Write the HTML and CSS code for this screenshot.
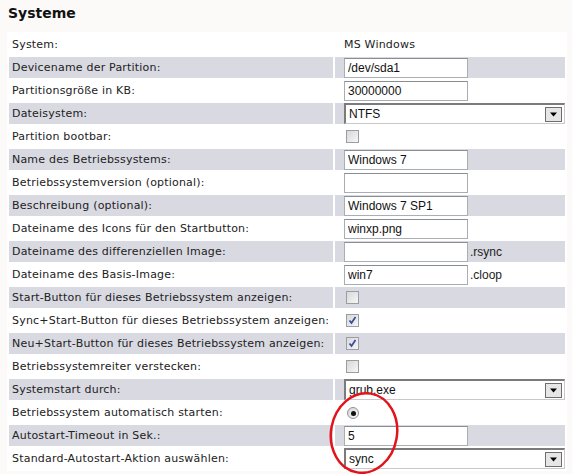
FILE: index.html
```html
<!DOCTYPE html>
<html>
<head>
<meta charset="utf-8">
<link rel="stylesheet" href="styles.css">
</head>
<body>
<div class="page">
  <h1 class="title">Systeme</h1>
  <table class="form">
    <tr class="odd"><td class="lbl">System:</td><td class="val">MS Windows</td></tr>
    <tr class="even"><td class="lbl">Devicename der Partition:</td><td class="val"><input class="txt" type="text" value="/dev/sda1"></td></tr>
    <tr class="odd"><td class="lbl">Partitionsgröße in KB:</td><td class="val"><input class="txt" type="text" value="30000000"></td></tr>
    <tr class="even"><td class="lbl">Dateisystem:</td><td class="val"><div class="sel"><span class="sel-text">NTFS</span><span class="sel-btn"><svg width="9" height="5" viewBox="0 0 9 5"><path d="M1 0.5h7L4.5 4.5z" fill="#000"/></svg></span></div></td></tr>
    <tr class="odd"><td class="lbl">Partition bootbar:</td><td class="val"><span class="cb"></span></td></tr>
    <tr class="even"><td class="lbl">Name des Betriebssystems:</td><td class="val"><input class="txt" type="text" value="Windows 7"></td></tr>
    <tr class="odd"><td class="lbl">Betriebssystemversion (optional):</td><td class="val"><input class="txt" type="text" value=""></td></tr>
    <tr class="even"><td class="lbl">Beschreibung (optional):</td><td class="val"><input class="txt" type="text" value="Windows 7 SP1"></td></tr>
    <tr class="odd"><td class="lbl">Dateiname des Icons für den Startbutton:</td><td class="val"><input class="txt" type="text" value="winxp.png"></td></tr>
    <tr class="even"><td class="lbl">Dateiname des differenziellen Image:</td><td class="val"><input class="txt" type="text" value=""><span class="ext">.rsync</span></td></tr>
    <tr class="odd"><td class="lbl">Dateiname des Basis-Image:</td><td class="val"><input class="txt" type="text" value="win7"><span class="ext">.cloop</span></td></tr>
    <tr class="even"><td class="lbl">Start-Button für dieses Betriebssystem anzeigen:</td><td class="val"><span class="cb"></span></td></tr>
    <tr class="odd"><td class="lbl">Sync+Start-Button für dieses Betriebssystem anzeigen:</td><td class="val"><span class="cb"><svg width="11" height="11" viewBox="0 0 11 11"><path d="M2.5 5.5l2 2.5 4-6" fill="none" stroke="#3b4f9a" stroke-width="1.8"/></svg></span></td></tr>
    <tr class="even"><td class="lbl">Neu+Start-Button für dieses Betriebssystem anzeigen:</td><td class="val"><span class="cb"><svg width="11" height="11" viewBox="0 0 11 11"><path d="M2.5 5.5l2 2.5 4-6" fill="none" stroke="#3b4f9a" stroke-width="1.8"/></svg></span></td></tr>
    <tr class="odd"><td class="lbl">Betriebssystemreiter verstecken:</td><td class="val"><span class="cb"></span></td></tr>
    <tr class="even"><td class="lbl">Systemstart durch:</td><td class="val"><div class="sel"><span class="sel-text">grub.exe</span><span class="sel-btn"><svg width="9" height="5" viewBox="0 0 9 5"><path d="M1 0.5h7L4.5 4.5z" fill="#000"/></svg></span></div></td></tr>
    <tr class="odd"><td class="lbl">Betriebssystem automatisch starten:</td><td class="val"><span class="radio"><span class="dot"></span></span></td></tr>
    <tr class="even"><td class="lbl">Autostart-Timeout in Sek.:</td><td class="val"><input class="txt" type="text" value="5"></td></tr>
    <tr class="odd"><td class="lbl">Standard-Autostart-Aktion auswählen:</td><td class="val"><div class="sel"><span class="sel-text">sync</span><span class="sel-btn"><svg width="9" height="5" viewBox="0 0 9 5"><path d="M1 0.5h7L4.5 4.5z" fill="#000"/></svg></span></div></td></tr>
  </table>
  <svg class="mark" width="90" height="110" viewBox="0 0 90 110">
    <ellipse cx="45" cy="55" rx="33" ry="40" fill="none" stroke="#e2141b" stroke-width="2.5" transform="rotate(10 45 55)"/>
  </svg>
</div>
</body>
</html>
```

FILE: styles.css
```css
html, body {
  margin: 0;
  padding: 0;
  background: #fbfaf8;
}
.page {
  position: relative;
  padding: 5px 4px 0 8px;
  height: 469px;
  overflow: hidden;
  font-family: "DejaVu Sans", Verdana, sans-serif;
  font-size: 11px;
  color: #222;
}
.title {
  margin: 0;
  font-size: 14px;
  font-weight: bold;
  line-height: 16px;
  color: #111;
}
.form {
  margin-top: 11px;
  width: 560px;
  border-collapse: separate;
  border-spacing: 2px;
  background: #fff;
  margin-left: -1px;
}
.form td {
  height: 21px;
  padding: 0;
  vertical-align: middle;
  letter-spacing: 0.2px;
}
.form .lbl {
  width: 321px;
  padding-left: 3px;
  white-space: nowrap;
}
.form .val {
  padding-left: 9px;
  white-space: nowrap;
}
.even td {
  background: #d9d9e1;
}
.odd td {
  background: #fff;
}
.txt {
  box-sizing: border-box;
  width: 124px;
  height: 20px;
  margin: 0;
  padding: 0 3px;
  border: 1px solid #a9aeb3;
  border-top-color: #8a8e93;
  background: #fff;
  font-family: "Liberation Sans", Arial, sans-serif;
  font-size: 12px;
  letter-spacing: 0;
  color: #111;
  vertical-align: middle;
}
.ext {
  font-family: "Liberation Sans", Arial, sans-serif;
  font-size: 12px;
  letter-spacing: 0;
  margin-left: 2px;
  vertical-align: middle;
}
.sel {
  box-sizing: border-box;
  width: 221px;
  height: 21px;
  display: flex;
  align-items: center;
  justify-content: space-between;
  border: 1px solid #c9c9c9;
  border-top: 2px solid #7b7b7b;
  border-left: 2px solid #7b7b7b;
  background: #fff;
  font-family: "Liberation Sans", Arial, sans-serif;
  font-size: 12px;
  letter-spacing: 0;
  color: #111;
}
.sel-text {
  padding-left: 3px;
}
.sel-btn {
  box-sizing: border-box;
  width: 17px;
  height: 15px;
  margin-right: 2px;
  border: 1px solid #6e6e6e;
  background: #e6e6e6;
  display: flex;
  align-items: center;
  justify-content: center;
}
.cb {
  box-sizing: border-box;
  display: inline-flex;
  align-items: center;
  justify-content: center;
  width: 13px;
  height: 13px;
  margin-left: 2px;
  border: 1px solid #9a9ea2;
  background: linear-gradient(135deg, #d8d8d8, #f6f6f6);
  vertical-align: middle;
}
.radio {
  box-sizing: border-box;
  display: inline-flex;
  align-items: center;
  justify-content: center;
  width: 12px;
  height: 12px;
  margin-left: 3px;
  border-radius: 50%;
  border: 1px solid #8e9194;
  background: linear-gradient(135deg, #d6d6d6, #fafafa);
  vertical-align: middle;
}
.radio .dot {
  width: 5px;
  height: 5px;
  border-radius: 50%;
  background: #111;
}
.mark {
  position: absolute;
  left: 319px;
  top: 378px;
}
```
